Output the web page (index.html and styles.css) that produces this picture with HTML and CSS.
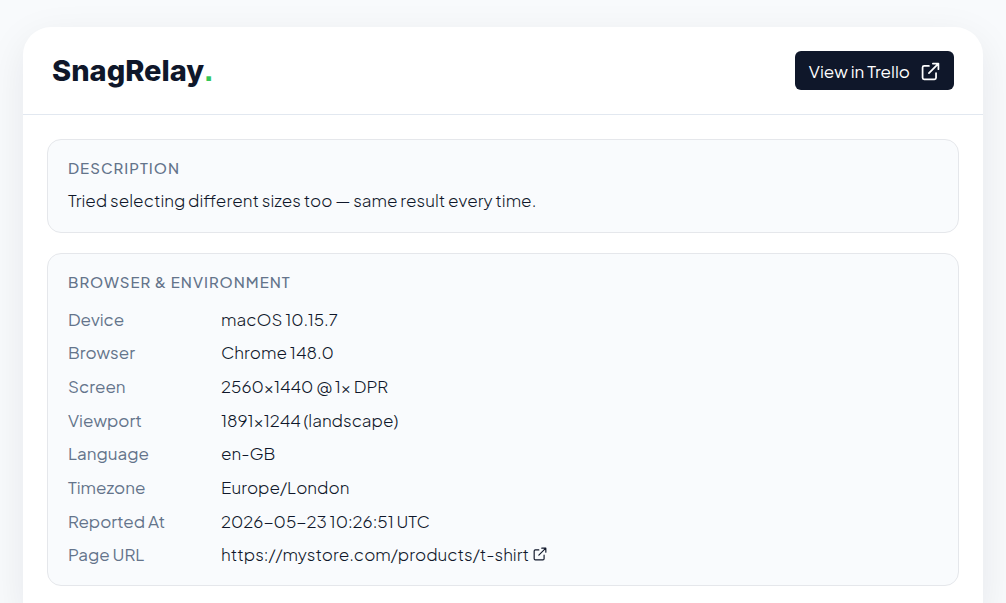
FILE: index.html
```html
<!DOCTYPE html>
<html lang="en">
<head>
  <meta charset="UTF-8" />
  <meta name="viewport" content="width=device-width, initial-scale=1.0" />
  <title>SnagRelay</title>
  <link rel="stylesheet" href="styles.css">
</head>
<body>
  <main class="report">
    <header class="report-header">
      <h1 class="logo">SnagRelay<span class="dot">.</span></h1>
      <a class="trello-link" href="#trello">
        View in Trello
        <svg class="icon" viewBox="0 0 24 24" aria-hidden="true">
          <path d="M10 5H4a2 2 0 0 0-2 2v13a2 2 0 0 0 2 2h13a2 2 0 0 0 2-2v-6" />
          <path d="M15 2h7v7M10 14L22 2" />
        </svg>
      </a>
    </header>

    <div class="panels">
      <section class="panel">
        <h2>Description</h2>
        <p>Tried selecting different sizes too — same result every time.</p>
      </section>

      <section class="panel">
        <h2 id="env-title">Browser &amp; Environment</h2>
        <table class="env" aria-labelledby="env-title">
          <tr><th scope="row">Device</th><td>macOS 10.15.7</td></tr>
          <tr><th scope="row">Browser</th><td>Chrome 148.0</td></tr>
          <tr><th scope="row">Screen</th><td>2560×1440 @ 1x DPR</td></tr>
          <tr><th scope="row">Viewport</th><td>1891×1244 (landscape)</td></tr>
          <tr><th scope="row">Language</th><td>en-GB</td></tr>
          <tr><th scope="row">Timezone</th><td>Europe/London</td></tr>
          <tr><th scope="row">Reported At</th><td>2026-05-23 10:26:51 UTC</td></tr>
          <tr>
            <th scope="row">Page URL</th>
            <td>
              <a class="page-link" href="https://mystore.com/products/t-shirt">https://mystore.com/products/t-shirt
                <svg class="icon" viewBox="0 0 24 24" aria-hidden="true">
                  <path d="M10 5H4a2 2 0 0 0-2 2v13a2 2 0 0 0 2 2h13a2 2 0 0 0 2-2v-6" />
                  <path d="M15 2h7v7M10 14L22 2" />
                </svg>
              </a>
            </td>
          </tr>
        </table>
      </section>
    </div>
  </main>
</body>
</html>
```
FILE: styles.css
```css
* { box-sizing: border-box; }
body {
  display: flex;
  min-height: 100vh;
  margin: 0;
  padding: 27px 23px 0;
  background: #f8fafc;
  color: #0f172a;
  font-family: "Plus Jakarta Sans", "Inter", sans-serif;
  font-size: 17px;
  font-weight: 300;
  line-height: 24px;
}
h1, h2, p { margin: 0; }

.report {
  flex: 1;
  background: white;
  border-radius: 28px 28px 0 0;
  box-shadow: 0 12px 40px rgba(15, 23, 42, 0.08);
}
.report-header {
  display: flex;
  align-items: center;
  justify-content: space-between;
  padding: 24px 29px;
  border-bottom: 1px solid #e2e8f0;
}
.logo { font-family: "Inter", sans-serif; font-size: 29px; line-height: 34px; font-weight: 800; }
.dot { color: #34c759; font-family: "Liberation Sans", sans-serif; font-size: 32px; line-height: 1; }

.icon { fill: none; stroke: currentColor; stroke-width: 2; stroke-linecap: round; stroke-linejoin: round; }
.trello-link {
  display: flex;
  align-items: center;
  gap: 11px;
  padding: 8px 14px 7px;
  border-radius: 6px;
  background: #0f172a;
  color: white;
  font-weight: 400;
  text-decoration: none;
}
.trello-link .icon { width: 19px; height: 19px; stroke-width: 2.2; }

.panels { display: flex; flex-direction: column; gap: 20px; padding: 24px; }
.panel { padding: 17px 20px 14px; border: 1px solid #e5e7eb; border-radius: 14px; background: #f9fbfd; }
.panel h2 {
  margin-bottom: 9px;
  color: #64748b;
  font-size: 15px;
  line-height: 22px;
  font-weight: 500;
  letter-spacing: 1px;
  text-transform: uppercase;
}
.panel p { padding-bottom: 6px; }

.env { width: 100%; height: 269px; border-collapse: collapse; }
.env th, .env td { padding: 0; text-align: left; }
.env th { width: 153px; color: #64748b; font-weight: 400; }
.page-link { display: flex; align-items: center; gap: 4px; color: inherit; text-decoration: none; }
.page-link .icon { width: 14px; height: 14px; }
```
